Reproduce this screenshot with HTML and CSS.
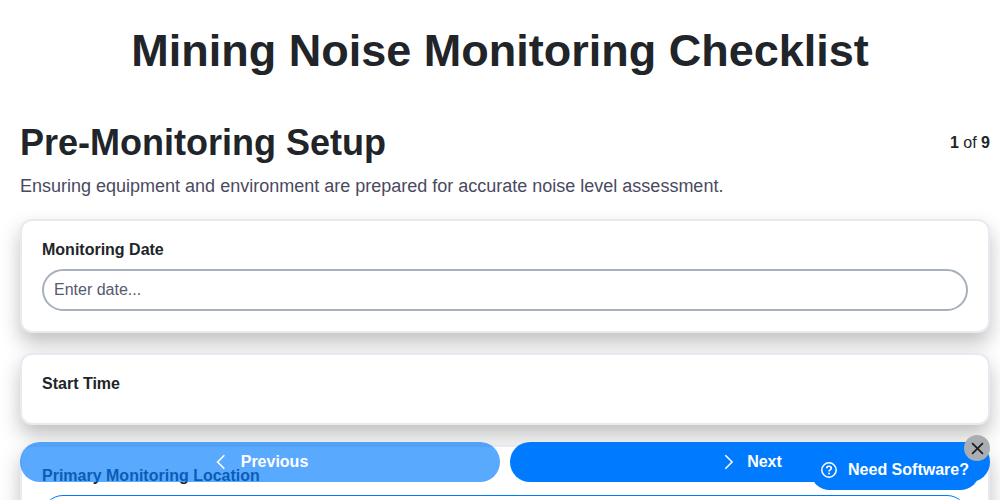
FILE: index.html
```html
<!DOCTYPE html>
<html lang="en">
<head>
<meta charset="utf-8">
<title>Mining Noise Monitoring Checklist</title>
<link rel="stylesheet" href="styles.css">
</head>
<body>
<h1 class="title">Mining Noise Monitoring Checklist</h1>
<main class="page">
  <header class="section-head">
    <h2 class="section-title">Pre-Monitoring Setup</h2>
    <div class="counter"><b>1</b> of <b>9</b></div>
  </header>
  <p class="section-desc">Ensuring equipment and environment are prepared for accurate noise level assessment.</p>
  <section class="card">
    <label class="label">Monitoring Date</label>
    <input class="field" type="text" placeholder="Enter date...">
  </section>
  <section class="card card-empty">
    <label class="label">Start Time</label>
  </section>
  <section class="card">
    <label class="label">Primary Monitoring Location</label>
    <input class="field field-active" type="text">
  </section>
</main>
<nav class="nav">
  <button class="btn btn-prev" type="button">
    <svg class="chev" viewBox="0 0 16 16" width="18" height="18"><path d="M11 2 5 8l6 6" fill="none" stroke="#fff" stroke-width="1.4"/></svg>
    <span>Previous</span>
  </button>
  <button class="btn" type="button">
    <svg class="chev" viewBox="0 0 16 16" width="18" height="18"><path d="m6.5 2 6 6-6 6" fill="none" stroke="#fff" stroke-width="1.4"/></svg>
    <span>Next</span>
  </button>
</nav>
<a class="promo">
  <svg viewBox="0 0 16 16" width="16" height="16"><circle cx="8" cy="8" r="7.2" fill="none" stroke="#fff" stroke-width="1.5"/><path d="M5.7 6.2C5.7 5 6.8 4.2 8 4.2s2.3.8 2.3 2c0 1.6-2.3 1.6-2.3 3.2" fill="none" stroke="#fff" stroke-width="1.6"/><circle cx="8" cy="11.6" r="1" fill="#fff"/></svg>
  <span>Need Software?</span>
</a>
<button class="close" type="button" aria-label="Close">
  <svg viewBox="0 0 12 12" width="13" height="13"><path d="M1 1l10 10M11 1 1 11" stroke="#1f1f1f" stroke-width="1.6" fill="none"/></svg>
</button>
</body>
</html>
```
FILE: styles.css
```css
* { box-sizing: border-box; }
html, body { margin: 0; height: 500px; overflow: hidden; }
body { background: #fff; color: #212529; font-family: "Liberation Sans", Arial, sans-serif; }
.title { margin: 0; padding-top: 23px; font-size: 45px; line-height: 55px; font-weight: 700; text-align: center; color: #212529; }
.page { padding: 0 10px 0 20px; }
.section-head { display: flex; justify-content: space-between; align-items: flex-start; margin-top: 44px; }
.section-title { margin: 0; font-size: 36px; line-height: 41px; font-weight: 700; }
.counter { font-size: 16px; line-height: 18px; margin-top: 12px; }
.section-desc { margin: 13px 0 0; font-size: 18px; line-height: 21px; color: #4a4a5e; }
.card { margin-top: 20px; padding: 20px; background: #fff; border: 2px solid #e9e9f1; border-radius: 12px; box-shadow: 0 10px 20px rgba(0,0,0,.25); }
.section-desc + .card { margin-top: 22px; }
.card-empty { height: 72px; }
.label { display: block; font-size: 16px; line-height: 18px; font-weight: 700; margin-bottom: 10px; }
.field { display: block; width: 100%; height: 42px; padding: 0 10px; border: 2px solid #a8b0bc; border-radius: 21px; background: #fff; font: 16px "Liberation Sans", Arial, sans-serif; color: #212529; outline: none; }
.field::placeholder { color: #555a6e; opacity: 1; }
.field-active { border-width: 1px; border-color: #007bff; }
.nav { position: fixed; left: 20px; right: 10px; bottom: 18px; display: flex; gap: 10px; }
.btn { flex: 1; height: 40px; display: flex; align-items: center; justify-content: center; gap: 11px; border: 0; border-radius: 20px; background: #007bff; color: #fff; font: 700 16px "Liberation Sans", Arial, sans-serif; }
.btn-prev { opacity: .65; }
.promo { position: fixed; left: 810px; top: 449px; width: 170px; height: 41px; display: flex; align-items: center; justify-content: center; gap: 11px; border-radius: 20px; background: #007bff; color: #fff; font-size: 16px; font-weight: 700; }
.close { position: fixed; left: 964px; top: 435px; width: 26px; height: 26px; padding: 0; display: flex; align-items: center; justify-content: center; border: 0; border-radius: 50%; background: #a9aeb3; }
```
